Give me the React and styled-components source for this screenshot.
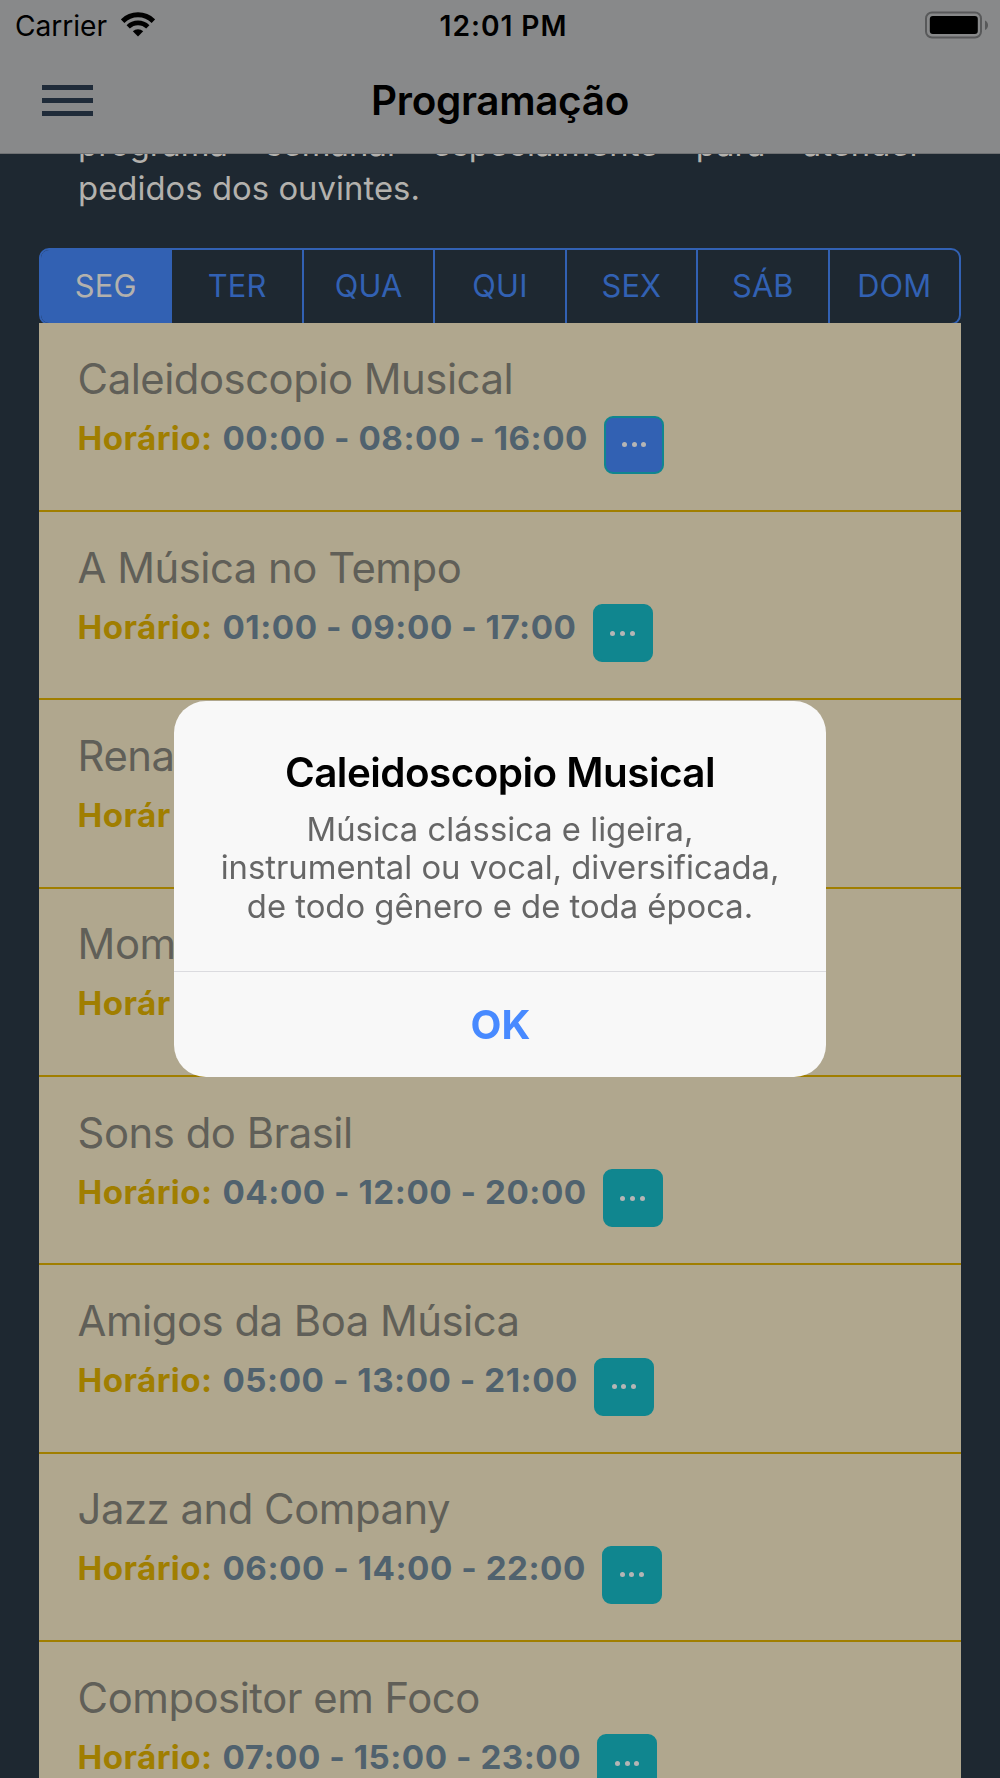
import React from "react";
import styled, { createGlobalStyle } from "styled-components";

const colors = {
  navy: "#1e2831",
  bar: "#88898a",
  blue: "#3261b3",
  sand: "#b0a78e",
  gold: "#a07e00",
  slate: "#50626e",
  teal: "#10868f",
  muted: "#b3b1ad",
  gray: "#605f58",
};

const GlobalStyle = createGlobalStyle`
  *, *::before, *::after { box-sizing: border-box; }
  html, body { margin: 0; background: ${colors.navy}; }
  body { font-family: Inter, "Liberation Sans", sans-serif; overflow: hidden; }
  button { font: inherit; margin: 0; padding: 0; border: 0; background: none; }
`;

const Screen = styled.div`
  display: flex;
  flex-direction: column;
  width: 1000px;
  height: 1778px;
  overflow: hidden;
  background: ${colors.navy};
`;

const Header = styled.header`
  flex: none;
  height: 154px;
  border-bottom: 1px solid #6f7173;
  background: ${colors.bar};
  color: #000;
`;

const StatusBar = styled.div`
  display: grid;
  grid-template-columns: 1fr auto 1fr;
  align-items: center;
  height: 50px;
  padding: 0 12px 0 15px;
  font-size: 28.2px;
  line-height: 50px;
`;

const Carrier = styled.div`
  display: flex;
  align-items: center;
  gap: 14px;
  letter-spacing: -0.05px;
  padding-top: 1px;
  svg { margin-top: -3px; }
`;

const Clock = styled.div`
  font-weight: 600;
  padding: 1px 0 0 4px;
  letter-spacing: 0.95px;
`;

const BatterySlot = styled.div`
  display: flex;
  justify-content: flex-end;
  margin-top: -2px;
`;

const NavBar = styled.div`
  display: grid;
  grid-template-columns: 120px 1fr 120px;
  align-items: center;
  height: 102px;
`;

const MenuButton = styled.button`
  display: flex;
  flex-direction: column;
  gap: 8px;
  width: 51px;
  margin: -1px 0 0 42px;
`;

const MenuLine = styled.span`
  height: 5px;
  background: #1f2b39;
`;

const PageTitle = styled.h1`
  margin: 0;
  text-align: center;
  font-size: 40.4px;
  font-weight: 600;
  line-height: 102px;
  letter-spacing: -0.3px;
`;

const Content = styled.main`
  flex: 1;
  min-height: 0;
  overflow: hidden;
  padding: 0 39px;
`;

const Intro = styled.p`
  margin: -31px 0 0;
  padding: 0 39px;
  height: 125px;
  color: ${colors.muted};
  font-size: 32.8px;
  line-height: 43.5px;
  letter-spacing: 0.05px;
`;

const IntroLine = styled.span`
  display: block;
  white-space: ${({ $justify }) => ($justify ? "normal" : "nowrap")};
  text-align-last: ${({ $justify }) => ($justify ? "justify" : "left")};
`;

const Tabs = styled.div`
  display: flex;
  height: 77px;
  border: 2px solid ${colors.blue};
  border-radius: 10px;
  overflow: hidden;
`;

const Tab = styled.button`
  flex: 1;
  border-left: ${({ $first }) => ($first ? 0 : 2)}px solid ${colors.blue};
  background: ${({ $active }) => ($active ? colors.blue : "transparent")};
  color: ${({ $active }) => ($active ? colors.muted : colors.blue)};
  font-size: 30.8px;
  line-height: 70px;
  letter-spacing: 0.2px;
  padding: 0 0 2px 0;
`;

const List = styled.div`
  display: flex;
  flex-direction: column;
  margin-top: -2px;
  padding-top: 0.6px;
  background: ${colors.sand};
  position: relative;
`;

const Row = styled.div`
  flex: none;
  height: 188.35px;
  padding: 26.6px 0 0 38.6px;
  border-bottom: 2.4px solid ${colors.gold};
`;

const RowTitle = styled.h2`
  margin: 0;
  color: ${colors.gray};
  font-size: 41.8px;
  font-weight: 400;
  line-height: 58px;
  letter-spacing: -0.47px;
`;

const RowLine = styled.div`
  display: flex;
  align-items: flex-start;
  font-size: 33.2px;
  font-weight: 700;
  line-height: 60px;
  white-space: pre;
`;

const Label = styled.span`
  color: ${colors.gold};
  margin-right: 10px;
  letter-spacing: 0.4px;
`;

const Times = styled.span`
  color: ${colors.slate};
  margin-right: 16px;
  letter-spacing: 0.52px;
`;

const MoreButton = styled.button`
  display: flex;
  align-items: center;
  justify-content: center;
  gap: 4.8px;
  width: 60px;
  height: 58px;
  margin-top: 7.6px;
  border: 2px solid ${colors.teal};
  border-radius: 9px;
  background: ${({ $active }) => ($active ? colors.blue : colors.teal)};
`;

const Dot = styled.span`
  width: 5px;
  height: 5px;
  border-radius: 50%;
  background: #b5b5b5;
`;

const Backdrop = styled.div`
  position: fixed;
  inset: 0;
  display: flex;
  align-items: center;
  justify-content: center;
`;

const Dialog = styled.section`
  display: flex;
  flex-direction: column;
  width: 652px;
  height: 376px;
  border-radius: 32px;
  background: #f8f8f8;
  overflow: hidden;
  text-align: center;
`;

const DialogBody = styled.div`
  flex: 1;
  padding-top: 46px;
`;

const DialogTitle = styled.h2`
  margin: 0;
  font-size: 40.4px;
  font-weight: 600;
  line-height: 52px;
  letter-spacing: -0.52px;
  color: #000;
`;

const DialogText = styled.p`
  margin: 10.6px 0 0;
  color: #666;
  font-size: 32.8px;
  line-height: 38.7px;
  letter-spacing: 0;
  white-space: pre-line;
`;

const DialogButton = styled.button`
  height: 106px;
  border-top: 1px solid #dbdbdf;
  color: #488aff;
  font-size: 40.2px;
  font-weight: 700;
  line-height: 105px;
  padding-left: 1px;
`;

const days = ["SEG", "TER", "QUA", "QUI", "SEX", "SÁB", "DOM"];

const programs = [
  { title: "Caleidoscopio Musical", times: "00:00 - 08:00 - 16:00" },
  { title: "A Música no Tempo", times: "01:00 - 09:00 - 17:00" },
  { title: "Rena", times: "" },
  { title: "Mom", times: "" },
  { title: "Sons do Brasil", times: "04:00 - 12:00 - 20:00" },
  { title: "Amigos da Boa Música", times: "05:00 - 13:00 - 21:00" },
  { title: "Jazz and Company", times: "06:00 - 14:00 - 22:00" },
  { title: "Compositor em Foco", times: "07:00 - 15:00 - 23:00" },
];

const WifiIcon = () => (
  <svg width="34" height="25" viewBox="0 0 34 25" fill="none">
    <path d="M1.6 9.1A22 22 0 0 1 32.4 9.1" stroke="#000" strokeWidth="5" />
    <path d="M7.2 14.9A14 14 0 0 1 26.8 14.9" stroke="#000" strokeWidth="4.6" />
    <path d="M11.8 19.2A7.6 7.6 0 0 1 22.2 19.2L17 24.6Z" fill="#000" />
  </svg>
);

const BatteryIcon = () => (
  <svg width="63" height="28" viewBox="0 0 63 28">
    <rect x="1" y="1.5" width="55" height="25" rx="6" fill="none" stroke="#58595a" strokeWidth="2" />
    <rect x="4.8" y="5" width="48" height="18" rx="3" fill="#000" />
    <path d="M60 9.4C64 11 64 17.4 60 19Z" fill="#58595a" />
  </svg>
);

export default function App() {
  return (
    <>
      <GlobalStyle />
      <Screen>
        <Header>
          <StatusBar>
            <Carrier>
              Carrier
              <WifiIcon />
            </Carrier>
            <Clock>12:01 PM</Clock>
            <BatterySlot>
              <BatteryIcon />
            </BatterySlot>
          </StatusBar>
          <NavBar>
            <MenuButton aria-label="Menu">
              <MenuLine />
              <MenuLine />
              <MenuLine />
            </MenuButton>
            <PageTitle>Programação</PageTitle>
          </NavBar>
        </Header>
        <Content>
          <Intro>
            <IntroLine $justify>programa semanal especialmente para atender</IntroLine>
            <IntroLine>pedidos dos ouvintes.</IntroLine>
          </Intro>
          <Tabs>
            {days.map((day, i) => (
              <Tab key={day} $first={i === 0} $active={i === 0}>
                {day}
              </Tab>
            ))}
          </Tabs>
          <List>
            {programs.map((program, i) => (
              <Row key={program.title}>
                <RowTitle>{program.title}</RowTitle>
                <RowLine>
                  <Label>{program.times ? "Horário:" : "Horár"}</Label>
                  {program.times && (
                    <>
                      <Times>{program.times}</Times>
                      <MoreButton $active={i === 0} aria-label="Detalhes">
                        <Dot />
                        <Dot />
                        <Dot />
                      </MoreButton>
                    </>
                  )}
                </RowLine>
              </Row>
            ))}
          </List>
        </Content>
      </Screen>
      <Backdrop>
        <Dialog role="dialog">
          <DialogBody>
            <DialogTitle>Caleidoscopio Musical</DialogTitle>
            <DialogText>
              {"Música clássica e ligeira,\ninstrumental ou vocal, diversificada,\nde todo gênero e de toda época."}
            </DialogText>
          </DialogBody>
          <DialogButton>OK</DialogButton>
        </Dialog>
      </Backdrop>
    </>
  );
}
